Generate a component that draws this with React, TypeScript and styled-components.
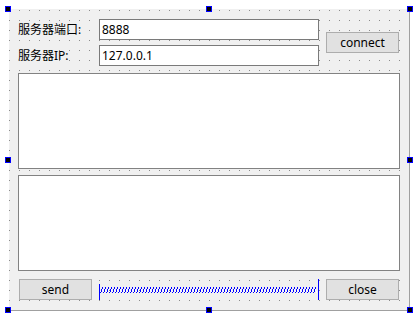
import styled, { createGlobalStyle } from 'styled-components'

const GlobalStyle = createGlobalStyle`
   html, body {
      margin: 0;
      padding: 0;
      background: #ffffff;
   }
   body {
      font-family: 'Noto Sans', 'Noto Sans CJK SC', sans-serif;
      font-size: 12px;
      color: #000;
   }
`

const Canvas = styled.div`
   width: 415px;
   height: 316px;
   padding: 9px 0 0 9px;
   box-sizing: border-box;
`

// the designer form, with its 10px dot grid
const Form = styled.div`
   position: relative;
   width: 401px;
   height: 302px;
   box-sizing: border-box;
   padding: 10px 0 0 9px;
   background-color: #f0f0f0;
   background-image: conic-gradient(at 1px 1px, transparent 75%, #8c8c8c 0);
   background-size: 10px 10px;
   background-position: 0 1px;
   border-right: 1px solid #a0a0a0;
   border-bottom: 1px solid #a0a0a0;
   display: flex;
   flex-direction: column;
`

const Handle = styled.span<{ $x: number; $y: number }>`
   position: absolute;
   left: ${(p) => p.$x}px;
   top: ${(p) => p.$y}px;
   width: 6px;
   height: 6px;
   box-sizing: border-box;
   border: 1px solid #0000ff;
   background: #000;
`

const Top = styled.div`
   display: flex;
   align-items: center;
   gap: 7px;
`

const Fields = styled.div`
   display: flex;
   flex-direction: column;
   gap: 5px;
`

const FieldRow = styled.div`
   display: flex;
   align-items: center;
`

const Label = styled.label`
   width: 81px;
   line-height: 21px;
   white-space: nowrap;
`

const LineEdit = styled.div`
   width: 220px;
   height: 21px;
   box-sizing: border-box;
   border: 1px solid #7a7a7a;
   background: #fff;
   padding: 0 2px;
   line-height: 19px;
   font-size: 12px;
`

const Button = styled.button`
   width: 73px;
   height: 21px;
   box-sizing: border-box;
   border: 1px solid #adadad;
   background: #e1e1e1;
   font-family: 'Noto Sans', 'Noto Sans CJK SC', sans-serif;
   font-size: 12px;
   color: #000;
   padding: 0;
   line-height: 19px;
`

const TextEdit = styled.div<{ $gap: number }>`
   width: 382px;
   height: 96px;
   box-sizing: border-box;
   margin-top: ${(p) => p.$gap}px;
   border: 1px solid #828282;
   background: #fff;
`

const Bottom = styled.div`
   display: flex;
   align-items: center;
   gap: 7px;
   margin-top: 8px;
   padding-left: 1px;
   height: 21px;
`

const SpacerSvg = styled.svg`
   display: block;
`

const Spacer = ({ width }: { width: number }) => {
   const h = 21
   const base = 11
   const amp = 3
   let white = ''
   let blue = ''
   for (let i = 0; i < width / 3; i++) {
      const x = i * 3
      white += `M${x + 0.5} ${base - amp + 0.5}L${x + 1.5} ${base + amp + 0.5}`
      if (x + 3 < width - 1) blue += `M${x + 1.5} ${base + amp + 0.5}L${x + 3.5} ${base - amp + 0.5}`
   }
   return (
      <SpacerSvg width={width} height={h} shapeRendering="crispEdges">
         <path d={white} stroke="#ffffff" strokeWidth={1} fill="none" />
         <path d={blue} stroke="#0000ff" strokeWidth={1} fill="none" />
         <line x1={0.5} y1={base - 6} x2={0.5} y2={base + 10} stroke="#0000ff" />
         <line x1={width - 0.5} y1={base - 11} x2={width - 0.5} y2={base + 10} stroke="#0000ff" />
      </SpacerSvg>
   )
}

const handles = [
   [-4, -3],
   [197, -3],
   [398, -3],
   [-4, 148],
   [398, 148],
   [-4, 298],
   [197, 298],
   [398, 298],
]

const App = () => {
   return (
      <>
         <GlobalStyle />
         <Canvas>
            <Form>
               <Top>
                  <Fields>
                     <FieldRow>
                        <Label>服务器端口:</Label>
                        <LineEdit>8888</LineEdit>
                     </FieldRow>
                     <FieldRow>
                        <Label>服务器IP:</Label>
                        <LineEdit>127.0.0.1</LineEdit>
                     </FieldRow>
                  </Fields>
                  <Button>connect</Button>
               </Top>
               <TextEdit $gap={7} />
               <TextEdit $gap={6} />
               <Bottom>
                  <Button>send</Button>
                  <Spacer width={220} />
                  <Button>close</Button>
               </Bottom>
               {handles.map(([x, y]) => (
                  <Handle key={`${x}-${y}`} $x={x} $y={y} />
               ))}
            </Form>
         </Canvas>
      </>
   )
}

export default App
